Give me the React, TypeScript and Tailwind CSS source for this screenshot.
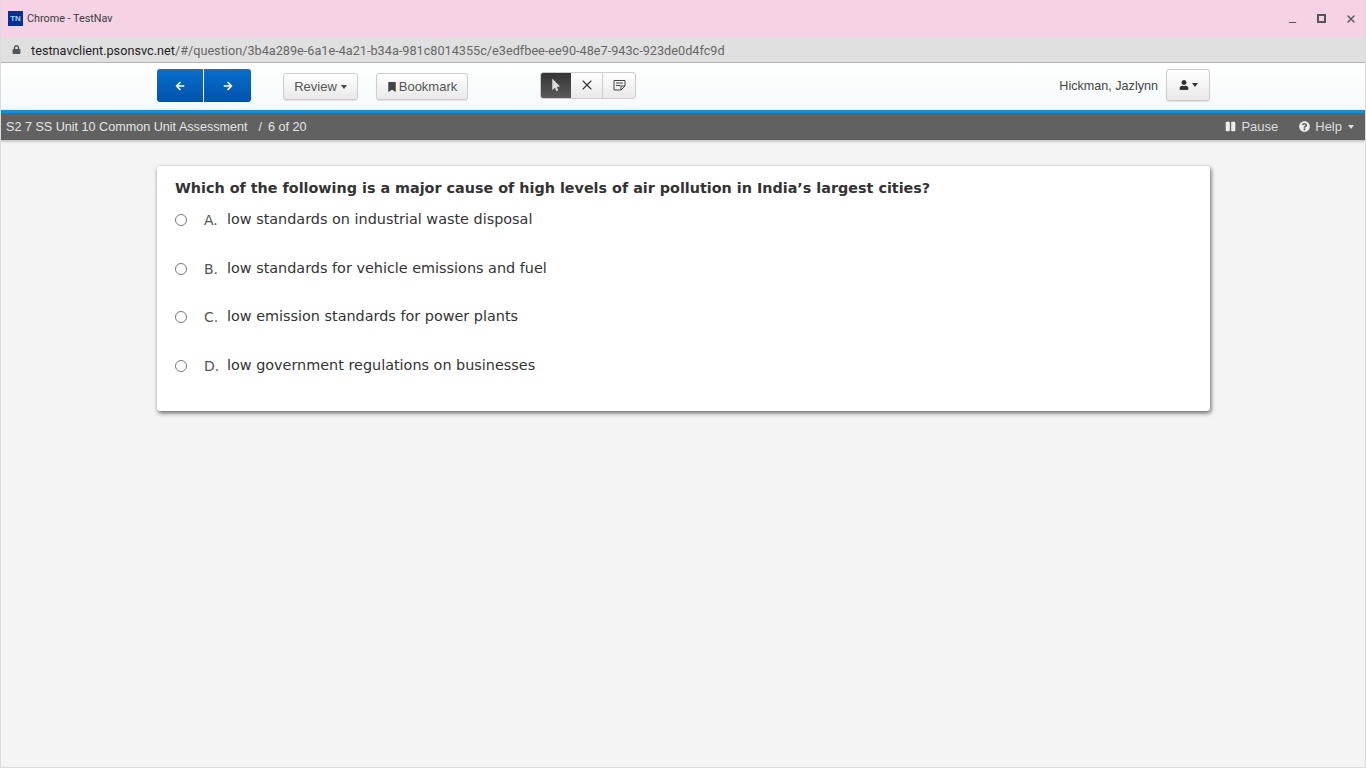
import { Minus, X } from "lucide-react";
import { FaArrowLeft, FaArrowRight, FaBookmark, FaLock, FaMousePointer, FaPause, FaQuestionCircle, FaUser } from "react-icons/fa";

const ANSWERS = [
  { letter: "A.", text: "low standards on industrial waste disposal", h: "h-[49px]" },
  { letter: "B.", text: "low standards for vehicle emissions and fuel", h: "h-[48px]" },
  { letter: "C.", text: "low emission standards for power plants", h: "h-[49px]" },
  { letter: "D.", text: "low government regulations on businesses", h: "h-[49px]" },
];

const btn =
  "flex items-center justify-center rounded-[3px] border border-[#ccc] bg-gradient-to-b from-white to-[#e9e9e9] text-[#555] shadow-[0_1px_1px_rgba(0,0,0,0.1)]";

function Caret({ color = "border-t-[#444]", className = "ml-[3px]" }: { color?: string; className?: string }) {
  return <span className={`w-0 h-0 border-x-[3.5px] border-x-transparent border-t-[4px] ${color} ${className}`} />;
}

export default function App() {
  return (
    <div className="w-[1366px] h-[768px] overflow-hidden flex flex-col font-['Liberation_Sans',sans-serif] bg-[#f4f4f4] border-x border-b border-x-[#dcdcdc] border-b-[#dcdcdc]">
      {/* window title */}
      <div className="h-[37px] -mx-px shrink-0 bg-[#f5d3e4] flex items-center pl-[8px]">
        <div className="w-[15px] h-[15px] bg-[#0b2f8f] text-[8px] leading-[15px] text-center text-[#9fd0f0] font-bold">TN</div>
        <span className="ml-[4px] mt-[2px] text-[10.8px] text-[#3c3c3c] font-['Roboto',sans-serif]">Chrome - TestNav</span>
        <div className="ml-auto flex items-center pr-[9px] text-[#555]">
          <Minus size={11} strokeWidth={2.4} className="mt-[7px]" />
          <span className="ml-[19px] w-[9px] h-[9px] border-2 border-[#555]" />
          <X size={12} strokeWidth={2.8} className="ml-[19px]" />
        </div>
      </div>

      {/* address bar */}
      <div className="h-[26px] -mx-px shrink-0 bg-[#e0e0e0] border-b border-[#b4b4b4] flex items-center pl-[12px] text-[12.7px] font-['Roboto',sans-serif]">
        <FaLock size={9} className="text-[#555]" />
        <span className="ml-[10px] mt-[3px] text-[#222]">testnavclient.psonsvc.net</span>
        <span className="mt-[3px] text-[#666]">/#/question/3b4a289e-6a1e-4a21-b34a-981c8014355c/e3edfbee-ee90-48e7-943c-923de0d4fc9d</span>
      </div>

      {/* toolbar */}
      <div className="h-[47px] -mx-px shrink-0 bg-gradient-to-b from-white to-[#f5fafa] flex items-center pl-[157px] pr-[156px] text-[12.6px] text-[#444]">
        <div className="flex w-[94px] h-[33px] -mt-[2px] rounded-[3px] overflow-hidden">
          <div className="w-[46px] bg-gradient-to-b from-[#0a70cc] to-[#0450ac] flex items-center justify-center text-white">
            <FaArrowLeft size={10} />
          </div>
          <div className="w-[47px] ml-px bg-gradient-to-b from-[#0a70cc] to-[#0450ac] flex items-center justify-center text-white">
            <FaArrowRight size={10} />
          </div>
        </div>
        <div className={`${btn} ml-[32px] w-[75px] h-[27px]`}>
          <span className="text-[13px]">Review</span>
          <Caret className="ml-[4px]" />
        </div>
        <div className={`${btn} ml-[18px] w-[92px] h-[27px]`}>
          <FaBookmark size={10} className="text-[#444] mr-[2px]" />
          <span className="text-[13px]">Bookmark</span>
        </div>
        <div className="ml-[72px] -mt-[3px] flex h-[27px] w-[96px] rounded-[3px] border border-[#ccc] bg-gradient-to-b from-white to-[#e9e9e9] overflow-hidden">
          <div className="w-[31px] -my-px -ml-px bg-gradient-to-b from-[#333] to-[#5c5c5c] flex items-center justify-center">
            <FaMousePointer size={12} className="text-[#ddd]" />
          </div>
          <div className="w-[32px] border-r border-[#ccc] flex items-center justify-center text-[#333]">
            <X size={16} strokeWidth={1.6} />
          </div>
          <div className="flex-1 flex items-center justify-center">
            <svg width="13" height="12" viewBox="0 0 13 12" fill="none" stroke="#444" strokeWidth="1">
              <path d="M1 1.5h11v5.5l-4 4H1z" />
              <path d="M3 4h7M3 6.5h4.5M8 11V7h4" />
            </svg>
          </div>
        </div>
        <span className="ml-auto text-[#444]">Hickman, Jazlynn</span>
        <div className={`${btn} ml-[8px] w-[44px] h-[32px] -mt-[3px]`}>
          <FaUser size={10} className="text-[#333]" />
          <Caret color="border-t-[#333]" />
        </div>
      </div>

      {/* test bar */}
      <div className="h-[30px] -mx-px shrink-0 bg-[#616161] border-t-[3px] border-[#1391d3] flex items-center pl-[6px] pr-[12px] text-[12.6px] text-[#e6e6e6] shadow-[0_1px_3px_rgba(0,0,0,0.3)]">
        <span className="mt-[2px]">S2 7 SS Unit 10 Common Unit Assessment</span>
        <span className="ml-[11px] mt-[2px]">/</span>
        <span className="ml-[6px] mt-[2px]">6 of 20</span>
        <div className="ml-auto flex items-center">
          <FaPause size={11} className="text-[#eee]" />
          <span className="ml-[5px] text-[13px] text-[#ddd]">Pause</span>
          <FaQuestionCircle size={11} className="ml-[21px] text-[#eee]" />
          <span className="ml-[5px] text-[13px] text-[#ddd]">Help</span>
          <Caret color="border-t-[#ddd]" className="ml-[6px]" />
        </div>
      </div>

      {/* question card */}
      <div className="mt-[26px] ml-[156px] w-[1053px] h-[245px] shrink-0 bg-white rounded-[3px] shadow-[1px_2px_4px_rgba(0,0,0,0.6)] pl-[18px] pt-[13px] font-['DejaVu_Sans',sans-serif] text-[#333]">
        <div className="text-[14.35px] leading-[18px] font-bold">
          Which of the following is a major cause of high levels of air pollution in India’s largest cities?
        </div>
        <div className="mt-[6px] flex flex-col">
          {ANSWERS.map((a) => (
            <div key={a.letter} className={`${a.h} flex items-start`}>
              <span className="mt-[11px] w-[12px] h-[12px] rounded-full border border-[#777] bg-white shrink-0" />
              <span className="mt-[8px] ml-[17px] w-[23px] text-[14px] leading-[18px] text-[#555]">{a.letter}</span>
              <span className="mt-[7px] text-[14.4px] leading-[18px]">{a.text}</span>
            </div>
          ))}
        </div>
      </div>
    </div>
  );
}
